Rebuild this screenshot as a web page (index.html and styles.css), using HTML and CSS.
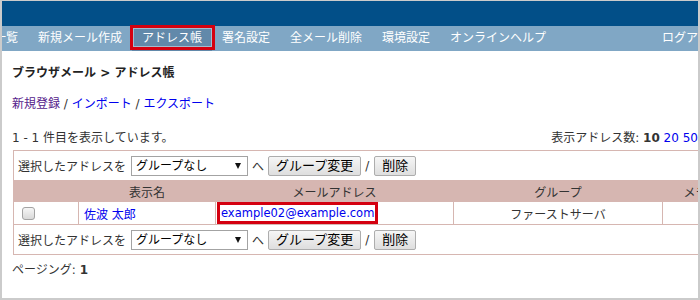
FILE: index.html
```html
<!DOCTYPE html>
<html lang="ja">
<head>
<meta charset="utf-8">
<title>アドレス帳</title>
<link rel="stylesheet" href="styles.css">
</head>
<body>
<div class="frame">
  <header class="topbar"></header>
  <nav class="menu">
    <a class="menu-item" href="#">メール一覧</a>
    <a class="menu-item" href="#">新規メール作成</a>
    <a class="menu-item is-current" href="#">アドレス帳</a>
    <a class="menu-item" href="#">署名設定</a>
    <a class="menu-item" href="#">全メール削除</a>
    <a class="menu-item" href="#">環境設定</a>
    <a class="menu-item" href="#">オンラインヘルプ</a>
    <a class="menu-item logout" href="#">ログアウト</a>
  </nav>
  <main class="content">
    <h1 class="crumb">ブラウザメール &gt; アドレス帳</h1>
    <p class="actions"><a class="link visited" href="#">新規登録</a> / <a class="link" href="#">インポート</a> / <a class="link" href="#">エクスポート</a></p>
    <div class="summary">
      <span>1 - 1 件目を表示しています。</span>
      <span>表示アドレス数: <b>10</b> <a class="link" href="#">20</a> <a class="link" href="#">50</a></span>
    </div>
    <table class="book">
      <colgroup>
        <col class="c-check"><col class="c-name"><col class="c-mail"><col class="c-group"><col class="c-memo">
      </colgroup>
      <tr class="opt">
        <td colspan="5">
          <div class="opt-bar">
            <span>選択したアドレスを</span>
            <span class="pick"><select class="pick-select"><option>グループなし</option></select></span>
            <span class="to">へ</span>
            <button class="btn" type="button">グループ変更</button>
            <span class="sep">/</span>
            <button class="btn" type="button">削除</button>
          </div>
        </td>
      </tr>
      <tr class="head">
        <th></th><th>表示名</th><th>メールアドレス</th><th>グループ</th><th>メモ</th>
      </tr>
      <tr class="row">
        <td class="cell-check"><input class="check" type="checkbox"></td>
        <td class="cell-name"><a class="link" href="#">佐波 太郎</a></td>
        <td class="cell-mail"><span class="mark"><a class="link" href="#">example02@example.com</a></span></td>
        <td class="cell-group">ファーストサーバ</td>
        <td></td>
      </tr>
      <tr class="opt">
        <td colspan="5">
          <div class="opt-bar">
            <span>選択したアドレスを</span>
            <span class="pick"><select class="pick-select"><option>グループなし</option></select></span>
            <span class="to">へ</span>
            <button class="btn" type="button">グループ変更</button>
            <span class="sep">/</span>
            <button class="btn" type="button">削除</button>
          </div>
        </td>
      </tr>
    </table>
    <p class="paging">ページング: <b>1</b></p>
  </main>
</div>
</body>
</html>
```
FILE: styles.css
```css
* { box-sizing: border-box; }
html, body { margin: 0; padding: 0; background: #fff; }
body {
  font-family: "DejaVu Sans", "Noto Sans CJK JP", sans-serif;
  font-size: 12px;
  color: #333;
}
.frame {
  width: 700px;
  height: 300px;
  border: solid #cbcbcb;
  border-width: 1px 2px 2px 2px;
  overflow: hidden;
}
.topbar { height: 25px; background: #024f88; }
.menu {
  display: flex;
  height: 25px;
  background: #80a7c5;
  margin: 0 -34px 0 -54px;
}
.menu-item {
  position: relative;
  padding: 0 10px;
  line-height: 25px;
  color: #fff;
  text-decoration: none;
  white-space: nowrap;
}
.menu-item.is-current { background: #6289aa; }
.menu-item.is-current::before {
  content: "";
  position: absolute;
  left: 1px; right: 0; top: 2px; bottom: 4px;
  border: 1px solid #a3bbcf;
}
.menu-item.is-current::after {
  content: "";
  position: absolute;
  left: -2px; right: -3px; top: -1px; bottom: 1px;
  border: 3px solid #d4000f;
}
.menu-item.logout { margin-left: auto; }

.content { padding: 12px 0 0 10px; }
.crumb { margin: 0; font-size: 12px; font-weight: bold; line-height: 20px; color: #222; }
.actions { margin: 11px 0 0; line-height: 20px; }
.summary { margin: 14px 0 0; line-height: 20px; display: flex; justify-content: space-between; }
.link { color: #0000ee; text-decoration: none; }
.link.visited { color: #551a8b; }

.book {
  margin: 2px 0 0 1px;
  border-collapse: collapse;
  table-layout: fixed;
  width: 715px;
}
.c-check { width: 65px; }
.c-name { width: 137px; }
.c-mail { width: 238px; }
.c-group { width: 209px; }
.c-memo { width: 66px; }
.book td, .book th { border: 1px solid #d6b6b1; padding: 0; }
.opt td { height: 30px; padding-left: 4px; }
.opt-bar { display: flex; align-items: center; white-space: nowrap; }
.pick { position: relative; display: inline-block; margin-left: 5px; height: 20px; }
.pick::after {
  content: "";
  position: absolute;
  right: 7px; top: 7px;
  border-left: 3.5px solid transparent;
  border-right: 3.5px solid transparent;
  border-top: 6px solid #111;
}
.pick-select {
  appearance: none;
  -webkit-appearance: none;
  display: block;
  width: 117px;
  height: 20px;
  margin: 0;
  padding: 0 0 0 4px;
  border: 1px solid #a3a3a3;
  border-radius: 0;
  background: #fff;
  color: #000;
  font: 12px "DejaVu Sans", "Noto Sans CJK JP", sans-serif;
}
.to { margin-left: 4px; }
.btn {
  height: 20px;
  margin: 0 0 0 4px;
  padding: 0 7px;
  border: 1px solid #adadad;
  border-radius: 2px;
  background: linear-gradient(#f6f6f6, #dedede);
  color: #000;
  font: 13px/18px "DejaVu Sans", "Noto Sans CJK JP", sans-serif;
}
.sep { margin-left: 4px; margin-right: 1px; }
.head th {
  height: 21px;
  background: #d6b6b1;
  font-weight: normal;
  color: #333;
  text-align: center;
}
.row td { height: 23px; vertical-align: middle; }
.cell-check { padding-left: 8px !important; }
.check {
  appearance: none;
  -webkit-appearance: none;
  display: block;
  width: 13px;
  height: 13px;
  margin: 0;
  border: 1px solid #a3a3a3;
  border-radius: 3px;
  background: linear-gradient(#f6f6f6, #d9d9d9);
}
.cell-name { padding-left: 5px !important; }
.cell-mail { padding-left: 1px !important; }
.mark {
  display: inline-block;
  border: 3px solid #d4000f;
  padding: 0 1px;
  line-height: 16px;
  font-size: 11.5px;
}
.cell-group { text-align: center; }
.paging { margin: 5px 0 0; line-height: 20px; }
```
